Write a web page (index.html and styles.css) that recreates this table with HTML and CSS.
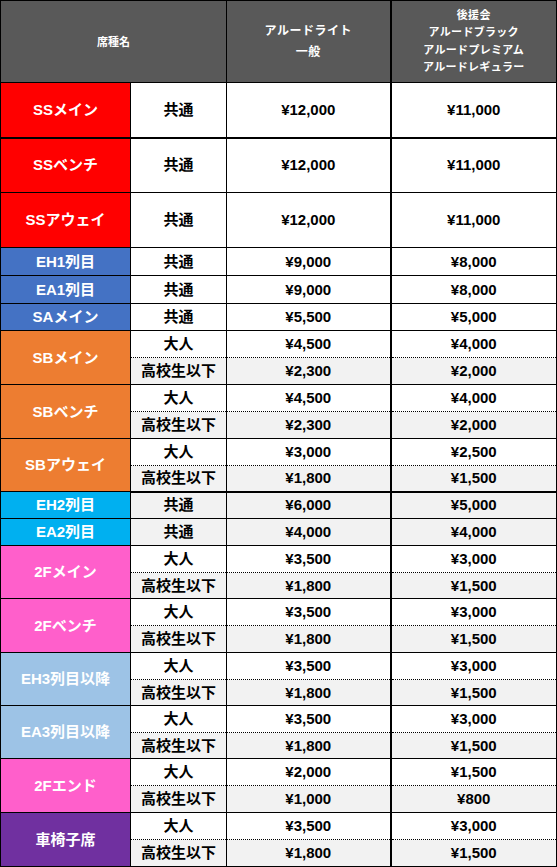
FILE: index.html
```html
<!DOCTYPE html>
<html lang="ja">
<head>
<meta charset="utf-8">
<title>席種別価格</title>
<link rel="stylesheet" href="styles.css">
</head>
<body>
<table class="price">
  <colgroup>
    <col class="c-name"><col class="c-type"><col class="c-p1"><col class="c-p2">
  </colgroup>
  <thead>
    <tr class="head">
      <th colspan="2">席種名</th>
      <th class="h2">アルードライト<br>一般</th>
      <th class="h3 p2">後援会<br>アルードブラック<br>アルードプレミアム<br>アルードレギュラー</th>
    </tr>
  </thead>
  <tbody>
    <tr class="big thick"><td class="name red">SSメイン</td><td>共通</td><td>¥12,000</td><td class="p2">¥11,000</td></tr>
    <tr class="big"><td class="name red">SSベンチ</td><td>共通</td><td>¥12,000</td><td class="p2">¥11,000</td></tr>
    <tr class="big"><td class="name red">SSアウェイ</td><td>共通</td><td>¥12,000</td><td class="p2">¥11,000</td></tr>

    <tr class="h28"><td class="name blue">EH1列目</td><td>共通</td><td>¥9,000</td><td class="p2">¥8,000</td></tr>
    <tr class="h28"><td class="name blue">EA1列目</td><td>共通</td><td>¥9,000</td><td class="p2">¥8,000</td></tr>
    <tr class="h27"><td class="name blue">SAメイン</td><td>共通</td><td>¥5,500</td><td class="p2">¥5,000</td></tr>

    <tr class="h27 adult"><td class="name orange" rowspan="2">SBメイン</td><td>大人</td><td>¥4,500</td><td class="p2">¥4,000</td></tr>
    <tr class="h27 kid"><td>高校生以下</td><td>¥2,300</td><td class="p2">¥2,000</td></tr>
    <tr class="h27 adult"><td class="name orange" rowspan="2">SBベンチ</td><td>大人</td><td>¥4,500</td><td class="p2">¥4,000</td></tr>
    <tr class="h27 kid"><td>高校生以下</td><td>¥2,300</td><td class="p2">¥2,000</td></tr>
    <tr class="h27 adult"><td class="name orange" rowspan="2">SBアウェイ</td><td>大人</td><td>¥3,000</td><td class="p2">¥2,500</td></tr>
    <tr class="h26 kid thick"><td>高校生以下</td><td>¥1,800</td><td class="p2">¥1,500</td></tr>

    <tr class="h27 grey"><td class="name cyan">EH2列目</td><td>共通</td><td>¥6,000</td><td class="p2">¥5,000</td></tr>
    <tr class="h27 grey"><td class="name cyan">EA2列目</td><td>共通</td><td>¥4,000</td><td class="p2">¥4,000</td></tr>

    <tr class="h27 adult"><td class="name pink" rowspan="2">2Fメイン</td><td>大人</td><td>¥3,500</td><td class="p2">¥3,000</td></tr>
    <tr class="h26 kid"><td>高校生以下</td><td>¥1,800</td><td class="p2">¥1,500</td></tr>
    <tr class="h27 adult"><td class="name pink" rowspan="2">2Fベンチ</td><td>大人</td><td>¥3,500</td><td class="p2">¥3,000</td></tr>
    <tr class="h27 kid"><td>高校生以下</td><td>¥1,800</td><td class="p2">¥1,500</td></tr>

    <tr class="h27 adult"><td class="name sky" rowspan="2">EH3列目以降</td><td>大人</td><td>¥3,500</td><td class="p2">¥3,000</td></tr>
    <tr class="h26 kid"><td>高校生以下</td><td>¥1,800</td><td class="p2">¥1,500</td></tr>
    <tr class="h27 adult"><td class="name sky" rowspan="2">EA3列目以降</td><td>大人</td><td>¥3,500</td><td class="p2">¥3,000</td></tr>
    <tr class="h26 kid"><td>高校生以下</td><td>¥1,800</td><td class="p2">¥1,500</td></tr>

    <tr class="h27 adult"><td class="name pink" rowspan="2">2Fエンド</td><td>大人</td><td>¥2,000</td><td class="p2">¥1,500</td></tr>
    <tr class="h27 kid"><td>高校生以下</td><td>¥1,000</td><td class="p2">¥800</td></tr>

    <tr class="h27 adult"><td class="name purple" rowspan="2">車椅子席</td><td>大人</td><td>¥3,500</td><td class="p2">¥3,000</td></tr>
    <tr class="h27 kid"><td>高校生以下</td><td>¥1,800</td><td class="p2">¥1,500</td></tr>
  </tbody>
</table>
</body>
</html>
```

FILE: styles.css
```css
html, body {
  margin: 0;
  padding: 0;
  background: #ffffff;
}

.price {
  border-collapse: collapse;
  table-layout: fixed;
  width: 556px;
  font-family: "Liberation Sans", "Noto Sans CJK JP", sans-serif;
  font-weight: bold;
  color: #000;
}

.c-name { width: 130px; }
.c-type { width: 96px; }
.c-p1 { width: 164px; }
.c-p2 { width: 166px; }

.price th,
.price td {
  border: 1px solid #000;
  padding: 0;
  text-align: center;
  vertical-align: middle;
  font-size: 15px;
  line-height: 18px;
  background: #ffffff;
}

.price .p2 {
  border-left: 2px solid #000;
}

.head {
  height: 82px;
}

.price .head th {
  background: #595959;
  color: #ffffff;
  font-size: 11px;
  font-weight: bold;
}

.price .head .h2 {
  font-size: 12px;
  line-height: 21px;
  letter-spacing: 0.5px;
}

.price .head .h3 {
  line-height: 17.5px;
  letter-spacing: 0.3px;
}

.big { height: 55px; }
.h28 { height: 28px; }
.h27 { height: 27px; }
.h26 { height: 26px; }

.price .thick > td {
  border-bottom: 2px solid #000;
}

.price .adult > td:not(.name) {
  border-bottom: 1px dotted #000;
}

.price .kid > td {
  border-top: 1px dotted #000;
  background: #f2f2f2;
}

.price .grey > td:not(.name) {
  background: #f2f2f2;
}

.price td.name {
  color: #ffffff;
}

.price td.red { background: #ff0000; }
.price td.blue { background: #4472c4; }
.price td.orange { background: #ed7d31; }
.price td.cyan { background: #00b0f0; }
.price td.pink { background: #ff5fcb; }
.price td.sky { background: #9dc3e6; }
.price td.purple { background: #7030a0; }
```
